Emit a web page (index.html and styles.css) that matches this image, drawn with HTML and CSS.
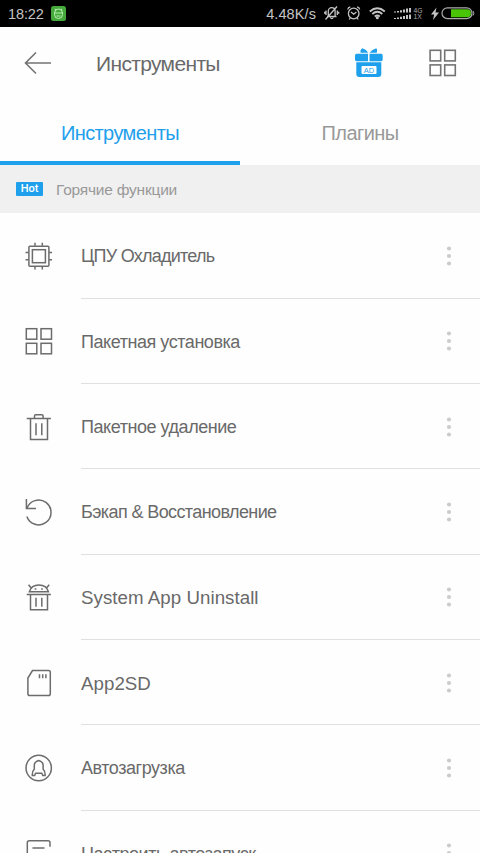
FILE: index.html
```html
<!DOCTYPE html>
<html lang="ru">
<head>
<meta charset="utf-8">
<title>Инструменты</title>
<link rel="stylesheet" href="styles.css">
</head>
<body>
<div class="status">
  <span class="clock">18:22</span>
  <svg class="app-badge" width="15" height="15" viewBox="0 0 15 15"><rect width="15" height="15" rx="2.5" fill="#45a83b"/><g fill="none" stroke="#b9efb4" stroke-width="1"><path d="M3.500 7a4 4 0 0 1 8 0v1.500a4 4 0 0 1-8 0zM3.500 7h8M4.700 4.500l-.5-1.700M10.300 4.500l.5-1.700M5.500 10h4"/></g></svg>
  <span class="speed">4.48K/s</span>
  <svg class="tray" width="153" height="27" viewBox="0 0 153 27">
    <g fill="none" stroke="#c4c4c4" stroke-width="1.300">
      <path d="M3 16.500h9.500M4.300 16V11a3.400 3.400 0 0 1 6.800 0v5M6.300 17.500q1.500 2.300 3 0M1.500 19.500L13 6.500M2 10.500v4.500M.7 11.800v2M13.300 10.500v4.500M14.700 11.800v2"/>
      <circle cx="29.700" cy="13.500" r="5.300"/><path d="M27 12l2.700 2.200 2.700-2.200M23.700 9.500q.4-2.200 2.600-2.700M35.700 9.500q-.4-2.200-2.600-2.700M26.200 18l-1 1.500M33.200 18l1 1.500"/>
      <path stroke-width="1.900" d="M45.800 11.500q7.500-6.300 15 0M48.300 14q5-4.300 10 0M50.800 16.400q2.500-2 5 0"/>
    </g>
    <circle cx="53.300" cy="17.800" r="1.500" fill="#c4c4c4"/>
    <g fill="#c4c4c4"><path d="M70 11.500h2v1h-2zM73 11h2v1.500h-2zM76 10.300h2v2.200h-2zM79 9.500h2v3h-2zM82 8.500h2V12.500h-2zM85 8h2v4.500h-2zM70 18h2v1h-2zM73 17.500h2V19h-2zM76 16.800h2V19h-2zM79 16h2v3h-2zM82 15h2v4h-2zM85 14.500h2V19h-2z"/><path d="M112.500 7.500l-5.500 7h3.200L109 20l6-7.500h-3.500z"/></g>
    <text class="net" x="89.500" y="12.800">4G</text><text class="net" x="89.500" y="19.300">1X</text>
    <rect x="118" y="7.800" width="30" height="10.800" rx="5.400" fill="#000" stroke="#aaa" stroke-width="1.200"/><path d="M149 11q1.800 2.200 0 4.500" stroke="#aaa" fill="none"/>
    <path d="M127 9.200h16a4 4 0 0 1 0 8h-16z" fill="#4ac407"/>
  </svg>
</div>
<header class="bar">
  <svg class="back" width="28" height="24" viewBox="0 0 28 24"><path d="M27 12H1.500M12 1.500L1.500 12 12 22.500"/></svg>
  <h1>Инструменты</h1>
  <svg class="gift" width="28" height="30" viewBox="0 0 28 30"><path d="M0 8q0-2.200 1.500-2.200H13v7.400H1.500Q0 13.200 0 11.500zM14.500 5.800h11.700q1.500 0 1.500 2.200v3.500q0 1.700-1.500 1.700H14.500zM1.300 14.200h25V26q0 3-3 3h-19q-3 0-3-3zM5.500 4.800Q5 1.500 7.500.3q4 1.200 5.700 4.500zM14.500 4.800Q17 1.300 21.300.3q2 2.200.5 4.500z" fill="#1ea0ec"/><rect x="6.500" y="18" width="15" height="8" rx="1" fill="#fff"/><text x="14" y="24.700" text-anchor="middle">AD</text></svg>
  <svg class="grid" width="28" height="28" viewBox="0 0 28 28"><rect x="1.100" y="1.300" width="10.600" height="10.600"/><rect x="15.700" y="1.300" width="10.600" height="10.600"/><rect x="1.100" y="15.900" width="10.600" height="10.600"/><rect x="15.700" y="15.900" width="10.600" height="10.600"/></svg>
</header>
<nav class="tabs"><a class="tab active">Инструменты</a><a class="tab">Плагины</a></nav>
<div class="section"><span class="hot">Hot</span><span class="section-name">Горячие функции</span></div>
<ul class="list">
  <li><svg class="icon" viewBox="0 0 30 30"><rect x="4.900" y="5.200" width="20" height="20" rx="1"/><rect x="8.400" y="8.700" width="13" height="13"/><path d="M11 1.800v3M18.300 1.800v3M11 25.500v3M18.300 25.500v3M1.500 11.500h3M1.500 18.800h3M25 11.500h3M25 18.800h3"/></svg><div class="cell"><span class="label tight">ЦПУ Охладитель</span><svg class="dots" viewBox="0 0 6 20"><circle cx="3" cy="2.500" r="2.100"/><circle cx="3" cy="10" r="2.100"/><circle cx="3" cy="17.500" r="2.100"/></svg></div></li>
  <li><svg class="icon" viewBox="0 0 30 30"><rect x="2.300" y="2.700" width="10.500" height="10.500"/><rect x="17" y="2.700" width="10.500" height="10.500"/><rect x="2.300" y="17.300" width="10.500" height="10.500"/><rect x="17" y="17.300" width="10.500" height="10.500"/></svg><div class="cell"><span class="label">Пакетная установка</span><svg class="dots" viewBox="0 0 6 20"><circle cx="3" cy="2.500" r="2.100"/><circle cx="3" cy="10" r="2.100"/><circle cx="3" cy="17.500" r="2.100"/></svg></div></li>
  <li><svg class="icon" viewBox="0 0 30 30"><path d="M2.700 6.600h24.200M10.500 6.600V4q0-1.300 1.300-1.300h6q1.300 0 1.300 1.300v2.600M6.500 6.600v21h17v-21M12 11.300v12M17.800 11.300v12"/></svg><div class="cell"><span class="label">Пакетное удаление</span><svg class="dots" viewBox="0 0 6 20"><circle cx="3" cy="2.500" r="2.100"/><circle cx="3" cy="10" r="2.100"/><circle cx="3" cy="17.500" r="2.100"/></svg></div></li>
  <li><svg class="icon" viewBox="0 0 30 30"><path d="M2.900 19.500A12.400 12.400 0 1 0 2.900 11.400M2.400 2v9.500H12"/></svg><div class="cell"><span class="label snug">Бэкап &amp; Восстановление</span><svg class="dots" viewBox="0 0 6 20"><circle cx="3" cy="2.500" r="2.100"/><circle cx="3" cy="10" r="2.100"/><circle cx="3" cy="17.500" r="2.100"/></svg></div></li>
  <li><svg class="icon" viewBox="0 0 30 30"><path d="M2.700 12.500h24.200M6.500 12.500v15.200h17V12.500M12 15.800v9M17.800 15.800v9M5.400 9.800h19Q22.500 3.100 14.900 3.100T5.400 9.800zM4.500 2.800l2.500 3M25.200 2.800l-2.500 3"/><path class="eyes" d="M11.500 6.300v1.500M18 6.300v1.500"/></svg><div class="cell"><span class="label latin">System App Uninstall</span><svg class="dots" viewBox="0 0 6 20"><circle cx="3" cy="2.500" r="2.100"/><circle cx="3" cy="10" r="2.100"/><circle cx="3" cy="17.500" r="2.100"/></svg></div></li>
  <li><svg class="icon" viewBox="0 0 30 30"><path d="M8.500 2.500h16q1.800 0 1.800 1.800v21.500q0 1.800-1.800 1.800H5.700q-1.800 0-1.800-1.800V10zM15.500 6.300v4M18.700 6.300v4M21.900 6.300v4"/></svg><div class="cell"><span class="label latin">App2SD</span><svg class="dots" viewBox="0 0 6 20"><circle cx="3" cy="2.500" r="2.100"/><circle cx="3" cy="10" r="2.100"/><circle cx="3" cy="17.500" r="2.100"/></svg></div></li>
  <li><svg class="icon" viewBox="0 0 30 30"><circle cx="14.700" cy="15" r="12.700"/><path d="M10.300 16V12q.3-3.300 4.400-4.500 4.100 1.200 4.400 4.500v4q2.300 2.500 2 6.500h-2.300l-1-2.200h-6.200l-1 2.200H8.300q-.3-4 2-6.500z"/></svg><div class="cell"><span class="label">Автозагрузка</span><svg class="dots" viewBox="0 0 6 20"><circle cx="3" cy="2.500" r="2.100"/><circle cx="3" cy="10" r="2.100"/><circle cx="3" cy="17.500" r="2.100"/></svg></div></li>
  <li><svg class="icon" viewBox="0 0 30 30"><path d="M26 8.700V4.800q0-2-2-2H5.300q-2 0-2 2V28H26V20M8.500 9.900h12"/></svg><div class="cell"><span class="label">Настроить автозапуск</span><svg class="dots" viewBox="0 0 6 20"><circle cx="3" cy="2.500" r="2.100"/><circle cx="3" cy="10" r="2.100"/><circle cx="3" cy="17.500" r="2.100"/></svg></div></li>
</ul>
</body>
</html>
```
FILE: styles.css
```css
* { box-sizing: border-box; }
html, body { margin: 0; height: 853px; overflow: hidden; }
body {
  display: flex;
  flex-direction: column;
  background: #fefefe;
  color: #696969;
  font-family: "Liberation Sans", Arial, sans-serif;
}
svg { display: block; flex: none; }
.status {
  display: flex;
  align-items: center;
  flex: none;
  height: 26.5px;
  padding-left: 8px;
  background: #000;
  color: #c4c4c4;
}
.clock { width: 43px; padding-top: 1px; font-size: 14.5px; letter-spacing: -.1px; }
.speed { margin-left: auto; padding-top: 1px; font-size: 14.5px; letter-spacing: .1px; margin-right: 8px; }
.tray { margin-right: 3px; }
.net { font-size: 6.8px; fill: #aaa; }
.bar {
  display: flex;
  align-items: center;
  flex: none;
  height: 73.5px;
  padding: 0 23px 0 24px;
}
.back { margin-top: -1px; }
.back, .grid { fill: none; stroke: #737373; stroke-width: 1.6; }
.bar h1 {
  margin: 0 auto 0 44px;
  padding-top: 2px;
  font-size: 21px;
  font-weight: 400;
  letter-spacing: -.65px;
}
.gift { margin-right: 46px; }
.gift text { font-size: 7.5px; fill: #1ea0ec; }
.tabs { display: flex; flex: none; height: 65px; }
.tab {
  flex: 1;
  display: flex;
  align-items: center;
  justify-content: center;
  border-bottom: 4px solid transparent;
  padding-top: 5px;
  font-size: 20px;
  letter-spacing: -.6px;
  color: #999;
}
.tab.active { border-color: #1ea0ec; color: #1ea0ec; }
.section {
  display: flex;
  align-items: center;
  flex: none;
  height: 48.33px;
  padding-left: 16px;
  background: #f0f0f0;
  color: #999;
}
.hot {
  width: 27px;
  height: 14px;
  margin-right: 13px;
  background: #1ea0ec;
  color: #fff;
  border-radius: 1px;
  font: 500 11px/14px Roboto, sans-serif;
  text-align: center;
}
.section-name { padding-top: 1px; font-size: 15.5px; letter-spacing: -.22px; }
.list { flex: 1; min-height: 0; overflow: hidden; list-style: none; margin: 0; padding: 0; }
.list li {
  display: flex;
  align-items: center;
  height: 85.33px;
  padding-left: 24px;
}
.icon {
  width: 30px;
  height: 30px;
  margin-right: 27px;
  fill: none;
  stroke: #6c6c6c;
  stroke-width: 1.5;
}
.eyes { stroke-width: 1.7; }
.cell {
  flex: 1;
  display: flex;
  align-items: center;
  justify-content: space-between;
  height: 100%;
  padding-right: 28.5px;
  border-bottom: 1px solid #e0e0e0;
}
.label { padding-top: 3px; font-size: 18px; letter-spacing: -.45px; white-space: nowrap; }
.label.snug { letter-spacing: -.6px; }
.label.tight { letter-spacing: -.75px; }
.label.latin { font-size: 18.7px; letter-spacing: .05px; }
.dots { width: 6px; height: 20px; margin-top: 1px; fill: #ccc; }
```
